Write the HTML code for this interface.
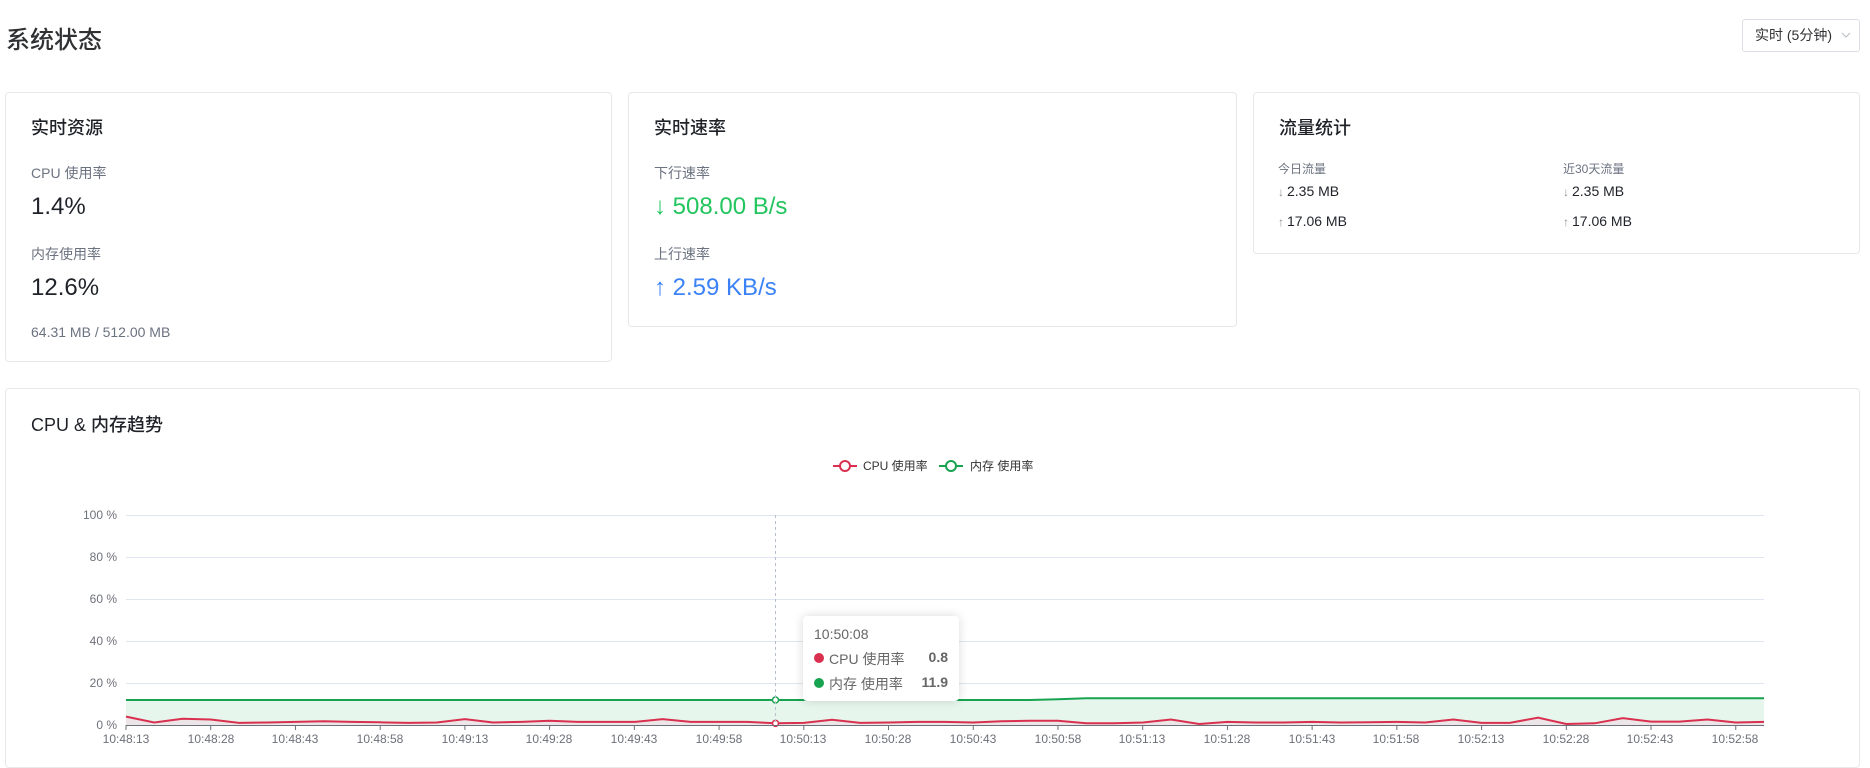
<!DOCTYPE html>
<html><head><meta charset="utf-8">
<style>
*{box-sizing:border-box;margin:0;padding:0}
html,body{width:1870px;height:763px;overflow:hidden;background:#fff;font-family:"Liberation Sans","Noto Sans CJK SC",sans-serif;color:#1f2329}
.abs{position:absolute}
.card{position:absolute;border:1px solid #e6e8ec;border-radius:4px;background:#fff}
.ct{position:absolute;left:25px;font-size:18px;font-weight:500;color:#1f2329}
.lbl{position:absolute;left:25px;font-size:14px;color:#6b7280}
.val{position:absolute;left:25px;font-size:24px;color:#1f2329}
.sm{position:absolute;font-size:14px;color:#6b7280}
.tv{position:absolute;font-size:14px;color:#1f2329}
.tv b{font-weight:normal;color:#8a8f99;font-size:12px;margin-right:3px}
</style></head><body>
<div class="abs" style="left:6px;top:20px;font-size:24px;font-weight:500;color:#303133">系统状态</div>
<div class="abs" style="left:1742px;top:19px;width:118px;height:33px;border:1px solid #dcdfe6;border-radius:3px;font-size:14px;color:#303133;line-height:31px;padding-left:12px">实时 (5分钟)<svg style="position:absolute;right:8px;top:11px" width="10" height="8" viewBox="0 0 10 8"><path d="M1 2 L5 6 L9 2" fill="none" stroke="#b8bcc4" stroke-width="1"/></svg></div>

<div class="card" style="left:5px;top:92px;width:607px;height:270px">
 <div class="ct" style="top:21px">实时资源</div>
 <div class="lbl" style="top:70px">CPU 使用率</div>
 <div class="val" style="top:100px">1.4%</div>
 <div class="lbl" style="top:151px">内存使用率</div>
 <div class="val" style="top:181px">12.6%</div>
 <div class="sm" style="left:25px;top:231px">64.31 MB / 512.00 MB</div>
</div>
<div class="card" style="left:628px;top:92px;width:609px;height:235px">
 <div class="ct" style="top:21px">实时速率</div>
 <div class="lbl" style="top:70px">下行速率</div>
 <div class="val" style="top:100px;color:#22c55e">↓ 508.00 B/s</div>
 <div class="lbl" style="top:151px">上行速率</div>
 <div class="val" style="top:181px;color:#3b82f6">↑ 2.59 KB/s</div>
</div>
<div class="card" style="left:1253px;top:92px;width:607px;height:162px">
 <div class="ct" style="top:21px">流量统计</div>
 <div class="sm" style="left:24px;top:67px;font-size:12px">今日流量</div>
 <div class="tv" style="left:24px;top:90px"><b>↓</b>2.35 MB</div>
 <div class="tv" style="left:24px;top:120px"><b>↑</b>17.06 MB</div>
 <div class="sm" style="left:309px;top:67px;font-size:12px">近30天流量</div>
 <div class="tv" style="left:309px;top:90px"><b>↓</b>2.35 MB</div>
 <div class="tv" style="left:309px;top:120px"><b>↑</b>17.06 MB</div>
</div>
<div class="card" style="left:5px;top:388px;width:1855px;height:380px">
 <div class="ct" style="top:22px">CPU &amp; 内存趋势</div>
</div>

<svg class="abs" style="left:0;top:0" width="1870" height="763" font-family="Liberation Sans, Noto Sans CJK SC, sans-serif">
 <g stroke="#e0e6f1" stroke-width="1">
  <line x1="126" y1="515.5" x2="1764" y2="515.5"/>
  <line x1="126" y1="557.5" x2="1764" y2="557.5"/>
  <line x1="126" y1="599.5" x2="1764" y2="599.5"/>
  <line x1="126" y1="641.5" x2="1764" y2="641.5"/>
  <line x1="126" y1="683.5" x2="1764" y2="683.5"/>
 </g>
 <g font-size="12" fill="#6e7079" text-anchor="end">
  <text x="117" y="519">100 %</text><text x="117" y="561">80 %</text><text x="117" y="603">60 %</text>
  <text x="117" y="645">40 %</text><text x="117" y="687">20 %</text><text x="117" y="729">0 %</text>
 </g>
 <g id="data"></g>
 <line x1="126" y1="725.5" x2="1764" y2="725.5" stroke="#6e7079" stroke-width="1"/>
 <g id="ticks" stroke="#6e7079"></g>
 <g id="xl" font-size="12" fill="#6e7079" text-anchor="middle">
  <text x="126" y="743">10:48:13</text><text x="211" y="743">10:48:28</text><text x="295" y="743">10:48:43</text>
  <text x="380" y="743">10:48:58</text><text x="465" y="743">10:49:13</text><text x="549" y="743">10:49:28</text>
  <text x="634" y="743">10:49:43</text><text x="719" y="743">10:49:58</text><text x="803" y="743">10:50:13</text>
  <text x="888" y="743">10:50:28</text><text x="973" y="743">10:50:43</text><text x="1058" y="743">10:50:58</text>
  <text x="1142" y="743">10:51:13</text><text x="1227" y="743">10:51:28</text><text x="1312" y="743">10:51:43</text>
  <text x="1396" y="743">10:51:58</text><text x="1481" y="743">10:52:13</text><text x="1566" y="743">10:52:28</text>
  <text x="1650" y="743">10:52:43</text><text x="1735" y="743">10:52:58</text>
 </g>
 <line x1="775.5" y1="515" x2="775.5" y2="725" stroke="#b8bfcc" stroke-dasharray="3,3" stroke-width="1"/>
 <line x1="833" y1="466" x2="857" y2="466" stroke="#d9304f" stroke-width="2"/>
 <circle cx="845" cy="466" r="5" fill="#fff" stroke="#d9304f" stroke-width="2"/>
 <text x="863" y="470" font-size="12" fill="#333">CPU 使用率</text>
 <line x1="939" y1="466" x2="963" y2="466" stroke="#17a34f" stroke-width="2"/>
 <circle cx="951" cy="466" r="5" fill="#fff" stroke="#17a34f" stroke-width="2"/>
 <text x="970" y="470" font-size="12" fill="#333">内存 使用率</text>
</svg>

<div class="abs" style="left:803px;top:616px;width:156px;height:85px;background:#fff;border-radius:4px;box-shadow:0 0 10px rgba(0,0,0,0.15)">
 <div class="abs" style="left:11px;top:10px;font-size:14px;color:#666">10:50:08</div>
 <div class="abs" style="left:11px;top:37px;width:10px;height:10px;border-radius:5px;background:#d9304f"></div>
 <div class="abs" style="left:26px;top:33px;font-size:14px;color:#666">CPU 使用率</div>
 <div class="abs" style="right:11px;top:33px;font-size:14px;color:#666;font-weight:bold">0.8</div>
 <div class="abs" style="left:11px;top:62px;width:10px;height:10px;border-radius:5px;background:#17a34f"></div>
 <div class="abs" style="left:26px;top:58px;font-size:14px;color:#666">内存 使用率</div>
 <div class="abs" style="right:11px;top:58px;font-size:14px;color:#666;font-weight:bold">11.9</div>
</div>

<script>
var cpu=[4,1.2,3,2.6,1,1.2,1.5,1.8,1.5,1.3,1,1.2,2.8,1.2,1.5,2,1.5,1.5,1.5,2.8,1.5,1.5,1.5,0.8,1,2.5,1,1.2,1.5,1.5,1.2,1.8,2,2,0.8,0.8,1.2,2.6,0.5,1.5,1.2,1.2,1.5,1.2,1.3,1.5,1.2,2.6,1,1,3.5,0.5,0.8,3.3,1.6,1.6,2.6,1.2,1.5,1.5];
var N=59,x0=126,dx=(1764-126)/58,base=725,h=210;
function Y(v){return base-v/100*h}
var mem=[],m="",cp="";
for(var i=0;i<N;i++){var mv=i<33?11.9:(i<34?12.3:12.7);mem.push(mv);}
for(var i=0;i<N;i++){var x=(x0+i*dx).toFixed(1);m+=x+","+Y(mem[i]).toFixed(1)+" ";cp+=x+","+Y(cpu[i]).toFixed(1)+" ";}
var ns='http://www.w3.org/2000/svg',g=document.getElementById('data');
function el(t,a){var e=document.createElementNS(ns,t);for(var k in a)e.setAttribute(k,a[k]);g.appendChild(e);return e;}
el('polygon',{points:x0+","+base+" "+m+"1764,"+base,fill:"#e7f6ed"});
el('polygon',{points:x0+","+base+" "+cp+"1764,"+base,fill:"#ece6e8"});
el('polyline',{points:m,fill:"none",stroke:"#17a34f","stroke-width":2});
el('polyline',{points:cp,fill:"none",stroke:"#d9304f","stroke-width":2});
el('circle',{cx:775.5,cy:Y(11.9),r:3,fill:"#fff",stroke:"#17a34f","stroke-width":1.5});
el('circle',{cx:775.5,cy:Y(0.8),r:3,fill:"#fff",stroke:"#d9304f","stroke-width":1.5});
var t=document.getElementById('ticks');
for(var j=0;j<20;j++){var l=document.createElementNS(ns,'line');var xx=x0+j*3*dx;l.setAttribute('x1',xx);l.setAttribute('x2',xx);l.setAttribute('y1',725);l.setAttribute('y2',730);t.appendChild(l);}
</script>
</body></html>
